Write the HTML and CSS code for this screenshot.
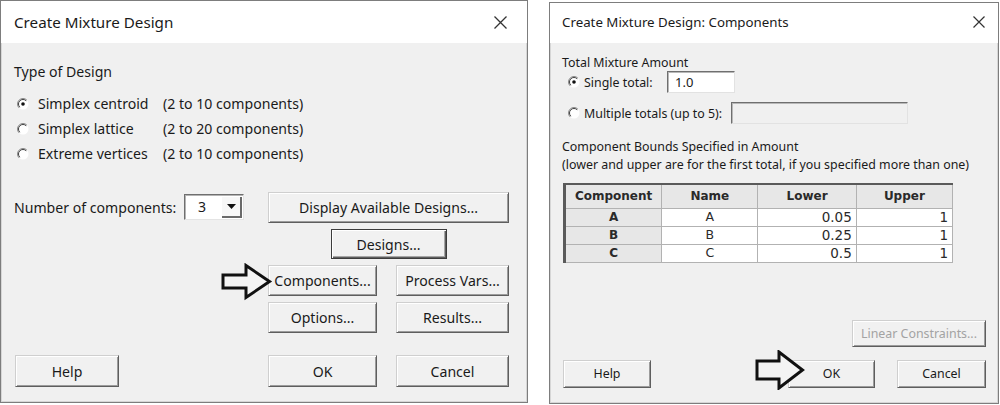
FILE: index.html
```html
<!DOCTYPE html>
<html lang="en">
<head>
<meta charset="utf-8">
<title>Create Mixture Design</title>
<link rel="stylesheet" href="styles.css">
</head>
<body>
<div class="desk">
  <section class="dlg dlg-main">
    <header class="titlebar">
      <span class="title">Create Mixture Design</span>
      <svg class="close" width="13" height="13" viewBox="0 0 13 13"><path d="M0.5 0.5L12.5 12.5M12.5 0.5L0.5 12.5" stroke="#333" stroke-width="1.3" fill="none"/></svg>
    </header>
    <div class="body main-body">
      <div class="group-label">Type of Design</div>
      <div class="radios">
        <div class="radio-row">
          <svg class="radio" width="12" height="12" viewBox="0 0 12 12"><circle cx="6" cy="6" r="5.5" fill="#fff"/><path d="M2.1 9.9A5.5 5.5 0 0 1 9.9 2.1" stroke="#8a8a8a" fill="none"/><path d="M2.8 9.2A4.5 4.5 0 0 1 9.2 2.8" stroke="#404040" fill="none"/><circle cx="6" cy="6" r="1.8" fill="#111"/></svg>
          <span class="rlabel">Simplex centroid</span><span class="rdesc">(2 to 10 components)</span>
        </div>
        <div class="radio-row">
          <svg class="radio" width="12" height="12" viewBox="0 0 12 12"><circle cx="6" cy="6" r="5.5" fill="#fff"/><path d="M2.1 9.9A5.5 5.5 0 0 1 9.9 2.1" stroke="#8a8a8a" fill="none"/><path d="M2.8 9.2A4.5 4.5 0 0 1 9.2 2.8" stroke="#404040" fill="none"/></svg>
          <span class="rlabel">Simplex lattice</span><span class="rdesc">(2 to 20 components)</span>
        </div>
        <div class="radio-row">
          <svg class="radio" width="12" height="12" viewBox="0 0 12 12"><circle cx="6" cy="6" r="5.5" fill="#fff"/><path d="M2.1 9.9A5.5 5.5 0 0 1 9.9 2.1" stroke="#8a8a8a" fill="none"/><path d="M2.8 9.2A4.5 4.5 0 0 1 9.2 2.8" stroke="#404040" fill="none"/></svg>
          <span class="rlabel">Extreme vertices</span><span class="rdesc">(2 to 10 components)</span>
        </div>
      </div>
      <div class="action-grid">
        <span class="num-label">Number of components:</span>
        <div class="combo">
          <span class="combo-val">3</span>
          <span class="combo-btn"><svg width="9" height="5" viewBox="0 0 9 5"><path d="M0 0H9L4.5 5Z" fill="#111"/></svg></span>
        </div>
        <div class="btn span-2">Display Available Designs...</div>
        <div class="btn default span-2 designs">Designs...</div>
        <div class="btn col-a">Components...</div>
        <div class="btn col-b">Process Vars...</div>
        <div class="btn col-a">Options...</div>
        <div class="btn col-b">Results...</div>
      </div>
      <div class="bottom-grid">
        <div class="btn help">Help</div>
        <div class="btn col-a">OK</div>
        <div class="btn col-b">Cancel</div>
      </div>
    </div>
    <svg class="pointer pointer-left" width="52" height="38" viewBox="0 0 52 38"><path d="M2 12H25V2.5L48.5 18.5L25 34.5V25H2Z" fill="#f4f4f4" stroke="#111" stroke-width="3" stroke-linejoin="miter"/></svg>
  </section>

  <section class="dlg dlg-comp">
    <header class="titlebar">
      <span class="title">Create Mixture Design: Components</span>
      <svg class="close" width="12" height="12" viewBox="0 0 12 12"><path d="M0.5 0.5L11.5 11.5M11.5 0.5L0.5 11.5" stroke="#333" stroke-width="1.2" fill="none"/></svg>
    </header>
    <div class="body comp-body">
      <div class="group-label">Total Mixture Amount</div>
      <div class="total-row single">
        <svg class="radio" width="12" height="12" viewBox="0 0 12 12"><circle cx="6" cy="6" r="5.5" fill="#fff"/><path d="M2.1 9.9A5.5 5.5 0 0 1 9.9 2.1" stroke="#8a8a8a" fill="none"/><path d="M2.8 9.2A4.5 4.5 0 0 1 9.2 2.8" stroke="#404040" fill="none"/><circle cx="6" cy="6" r="1.8" fill="#111"/></svg>
        <span class="tlabel">Single total:</span>
        <div class="field">1.0</div>
      </div>
      <div class="total-row multiple">
        <svg class="radio" width="12" height="12" viewBox="0 0 12 12"><circle cx="6" cy="6" r="5.5" fill="#fff"/><path d="M2.1 9.9A5.5 5.5 0 0 1 9.9 2.1" stroke="#8a8a8a" fill="none"/><path d="M2.8 9.2A4.5 4.5 0 0 1 9.2 2.8" stroke="#404040" fill="none"/></svg>
        <span class="tlabel">Multiple totals (up to 5):</span>
        <div class="field disabled"></div>
      </div>
      <div class="bounds-label">Component Bounds Specified in Amount</div>
      <div class="bounds-note">(lower and upper are for the first total, if you specified more than one)</div>
      <table class="grid">
        <colgroup><col class="c1"><col class="c2"><col class="c3"><col class="c4"></colgroup>
        <thead>
          <tr><th>Component</th><th>Name</th><th>Lower</th><th>Upper</th></tr>
        </thead>
        <tbody>
          <tr><th>A</th><td class="ctr">A</td><td class="num">0.05</td><td class="num">1</td></tr>
          <tr><th>B</th><td class="ctr">B</td><td class="num">0.25</td><td class="num">1</td></tr>
          <tr><th>C</th><td class="ctr">C</td><td class="num">0.5</td><td class="num">1</td></tr>
        </tbody>
      </table>
      <div class="btn disabled linear">Linear Constraints...</div>
      <div class="comp-bottom">
        <div class="btn c-help">Help</div>
        <div class="btn c-ok">OK</div>
        <div class="btn c-cancel">Cancel</div>
      </div>
    </div>
    <svg class="pointer pointer-right" width="50" height="40" viewBox="0 0 50 40"><path d="M2 11H24V2L47.5 20L24 38V29H2Z" fill="#f4f4f4" stroke="#111" stroke-width="3" stroke-linejoin="miter"/></svg>
  </section>
</div>
</body>
</html>
```

FILE: styles.css
```css
* { box-sizing: border-box; margin: 0; padding: 0; }

html, body {
  width: 1000px;
  height: 405px;
  overflow: hidden;
  background: #ffffff;
}

body {
  font-family: "Noto Sans", "Open Sans", sans-serif;
  color: #1a1a1a;
}

.desk {
  display: flex;
  align-items: flex-start;
  gap: 21px;
}

.dlg {
  position: relative;
  display: flex;
  flex-direction: column;
  background: #f0f0f0;
  border: 1px solid #7d7d7d;
  box-shadow: inset 0 0 0 1px #d6d6d6;
}

.dlg-main { width: 528px; height: 403px; }
.dlg-comp { width: 450px; height: 402px; margin-top: 2px; }

.titlebar {
  background: #ffffff;
  display: flex;
  align-items: center;
  justify-content: space-between;
  flex: none;
}

.dlg-main .titlebar { height: 42px; padding: 0 20px 0 13px; }
.dlg-main .title { font-size: 15.2px; }

.dlg-comp .titlebar { height: 40px; padding: 0 13px 2px 12px; }
.dlg-comp .title { font-size: 13.3px; }

/* ---------- main dialog ---------- */
.main-body {
  padding-left: 13px;
  font-size: 14.1px;
  display: flex;
  flex-direction: column;
}

.main-body .group-label {
  margin-top: 19px;
  line-height: 20px;
}

.radios {
  margin-top: 9px;
  display: flex;
  flex-direction: column;
}

.radio-row {
  height: 25px;
  display: flex;
  align-items: center;
  padding-left: 3px;
}

.radio { flex: none; display: block; }

.radio-row .rlabel {
  margin-left: 9px;
  width: 125px;
}

.action-grid,
.bottom-grid {
  display: grid;
  grid-template-columns: 170px 60px 24px 109px 19px 113px;
}

.action-grid {
  margin-top: 26px;
  grid-template-rows: 31px 30px 31px 31px;
  row-gap: 6px;
}

.num-label {
  grid-column: 1;
  grid-row: 1;
  align-self: center;
  line-height: 20px;
  margin-top: 0;
}

.combo {
  grid-column: 2;
  grid-row: 1;
  align-self: center;
  height: 26px;
  margin-top: -1px;
  display: flex;
  background: #ffffff;
  border-top: 1px solid #6f6f6f;
  border-left: 1px solid #6f6f6f;
  border-right: 1px solid #e4e4e4;
  border-bottom: 1px solid #e4e4e4;
  box-shadow: inset 1px 1px 0 #b4b4b4;
}

.combo-val {
  flex: 1;
  padding-left: 13px;
  line-height: 24px;
}

.combo-btn {
  width: 20px;
  margin: 2px 1px 1px 0;
  display: flex;
  align-items: center;
  justify-content: center;
  background: #f7f7f7;
  border-right: 2px solid #6a6a6a;
  border-bottom: 2px solid #6a6a6a;
}

.btn {
  display: flex;
  align-items: center;
  justify-content: center;
  background: #f1f1f1;
  border: 1px solid;
  border-color: #cfcfcf #5e5e5e #5e5e5e #cfcfcf;
  box-shadow: inset 1px 1px 0 #ffffff, inset -1px -1px 0 #9c9c9c;
  white-space: nowrap;
}

.span-2 { grid-column: 4 / 7; }
.col-a { grid-column: 4; }
.col-b { grid-column: 6; }

.designs {
  justify-self: center;
  width: 116px;
}

.btn.default {
  border: 1px solid #3c3c3c;
  box-shadow: inset 1px 1px 0 #ffffff, inset -1px -1px 0 #5e5e5e, inset -2px -2px 0 #a6a6a6;
}

.bottom-grid {
  margin-top: 22px;
  grid-template-rows: 32px;
}

.bottom-grid .help {
  grid-column: 1;
  width: 104px;
  margin-left: 1px;
}

.pointer { position: absolute; display: block; }
.pointer-left { left: 220px; top: 262px; }
.pointer-right { left: 205px; top: 347px; }

/* ---------- components dialog ---------- */
.comp-body {
  padding: 0 12px 0 12px;
  font-size: 12.4px;
  display: flex;
  flex-direction: column;
}

.comp-body .group-label {
  margin-top: 11px;
  line-height: 17px;
}

.total-row {
  height: 22px;
  display: flex;
  align-items: center;
  padding-left: 6px;
}

.total-row.multiple { margin-top: 9px; }

.total-row .tlabel { margin-left: 4px; }
.single .tlabel { width: 83px; }
.multiple .tlabel { width: 147px; }

.field {
  height: 22px;
  background: #ffffff;
  border-top: 1px solid #6f6f6f;
  border-left: 1px solid #6f6f6f;
  border-right: 1px solid #e2e2e2;
  border-bottom: 1px solid #e2e2e2;
  box-shadow: inset 1px 1px 0 #b8b8b8;
  padding-left: 7px;
  line-height: 20px;
  font-size: 13px;
}

.single .field { width: 68px; }
.field.disabled { width: 177px; background: #f0f0f0; }

.bounds-label {
  margin-top: 14px;
  line-height: 18px;
}

.bounds-note { line-height: 18px; }

.grid {
  margin-top: 9px;
  margin-left: 1px;
  width: 390px;
  table-layout: fixed;
  border-collapse: collapse;
  border-left: 3px solid #5a5a5a;
  border-top: 2px solid #5a5a5a;
  border-right: 1px solid #bdbdbd;
  border-bottom: 1px solid #bdbdbd;
  font-family: "DejaVu Sans", sans-serif;
}

.grid col.c1 { width: 97px; }
.grid col.c2 { width: 96px; }
.grid col.c3 { width: 98px; }
.grid col.c4 { width: 96px; }

.grid th,
.grid td {
  border: 1px solid #b2b2b2;
  height: 18px;
  padding: 0 4px;
  line-height: 16px;
  white-space: nowrap;
}

.grid thead th {
  height: 24px;
  background: #e7e7e7;
  font-weight: bold;
  font-size: 12px;
  color: #2a2a2a;
}

.grid tbody th {
  background: #e7e7e7;
  font-weight: bold;
  font-size: 12px;
  color: #2a2a2a;
}

.grid td {
  background: #ffffff;
  font-size: 13.5px;
  color: #2a2a2a;
}

.grid td.ctr { text-align: center; font-size: 12.5px; }
.grid td.num { text-align: right; }

.linear {
  align-self: flex-end;
  margin-top: 57px;
  width: 134px;
  height: 27px;
}

.btn.disabled { color: #a3a3a3; }

.comp-bottom {
  margin-top: 13px;
  display: flex;
  height: 28px;
}

.c-help { width: 88px; margin-left: 1px; }
.c-ok { width: 87px; margin-left: auto; }
.c-cancel { width: 89px; margin-left: 22px; }
```
